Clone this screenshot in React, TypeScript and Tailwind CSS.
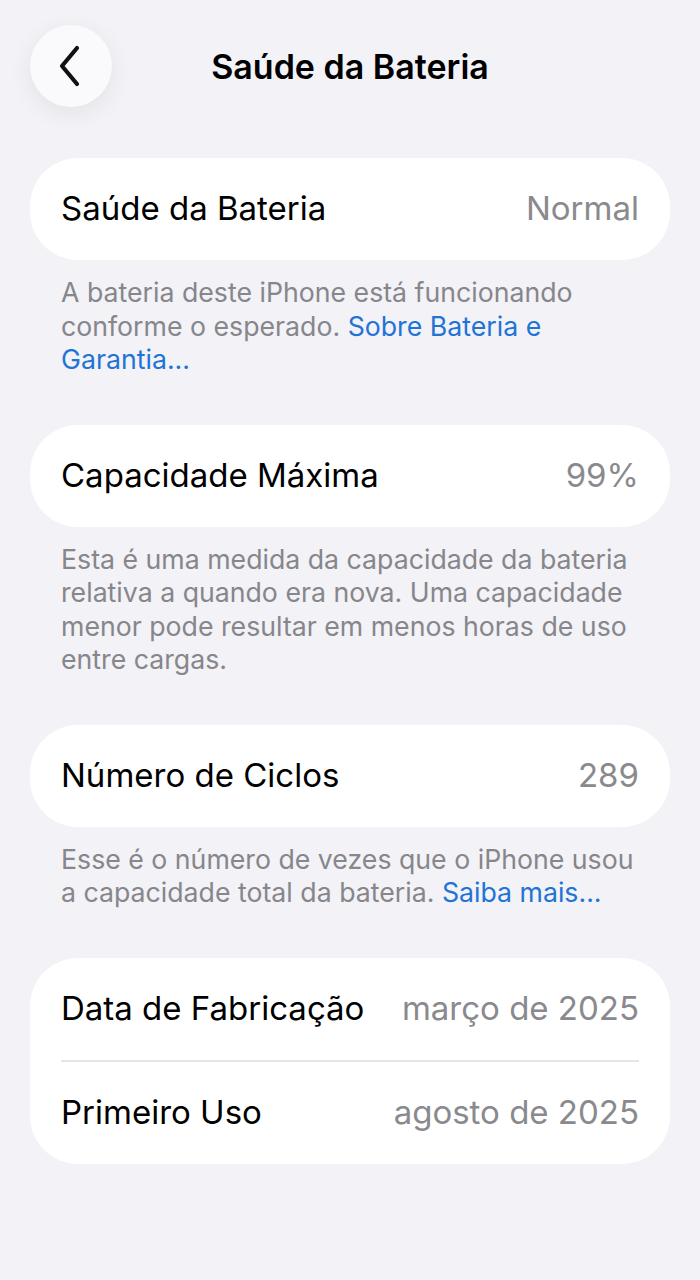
import React from "react";

const font = { fontFamily: "Inter, 'Noto Sans', sans-serif" };

function Row({ label, value }: { label: string; value: string }) {
  return (
    <div className="flex items-center justify-between h-[102px]">
      <span className="text-[33px] text-black">{label}</span>
      <span className="text-[33px] text-[#8a8a8e]">{value}</span>
    </div>
  );
}

function Footer({ children }: { children: React.ReactNode }) {
  return (
    <p className="px-[31px] pt-[16px] text-[26.7px] leading-[33.5px] text-[#86868b]">
      {children}
    </p>
  );
}

export default function App() {
  return (
    <div className="min-h-screen w-full bg-[#f2f2f7]" style={font}>
      <div className="relative flex items-center justify-center h-[132px]">
        <button className="absolute left-[30px] top-[25px] w-[82px] h-[82px] rounded-full bg-[#fafafc] shadow-[0_6px_24px_rgba(0,0,0,0.07)] flex items-center justify-center">
          <svg width="30" height="44" viewBox="0 0 30 44" fill="none">
            <path d="M21 4 L6 22 L21 40" stroke="#111" strokeWidth="4.2" strokeLinecap="round" strokeLinejoin="round" />
          </svg>
        </button>
        <h1 className="text-[34px] font-semibold text-black">Saúde da Bateria</h1>
      </div>

      <div className="px-[30px] pt-[26px]">
        <div className="bg-white rounded-[48px] px-[31px]">
          <Row label="Saúde da Bateria" value="Normal" />
        </div>
        <Footer>
          A bateria deste iPhone está funcionando conforme o esperado.{" "}
          <span className="text-[#1f74d6]">Sobre Bateria e Garantia...</span>
        </Footer>

        <div className="bg-white rounded-[48px] px-[31px] mt-[48px]">
          <Row label="Capacidade Máxima" value="99%" />
        </div>
        <Footer>
          Esta é uma medida da capacidade da bateria relativa a quando era nova. Uma capacidade menor pode resultar em menos horas de uso entre cargas.
        </Footer>

        <div className="bg-white rounded-[48px] px-[31px] mt-[48px]">
          <Row label="Número de Ciclos" value="289" />
        </div>
        <Footer>
          Esse é o número de vezes que o iPhone usou a capacidade total da bateria.{" "}
          <span className="text-[#1f74d6]">Saiba mais...</span>
        </Footer>

        <div className="bg-white rounded-[48px] px-[31px] mt-[48px]">
          <Row label="Data de Fabricação" value="março de 2025" />
          <div className="h-[2px] bg-[#e5e5ea]" />
          <Row label="Primeiro Uso" value="agosto de 2025" />
        </div>
      </div>
    </div>
  );
}
